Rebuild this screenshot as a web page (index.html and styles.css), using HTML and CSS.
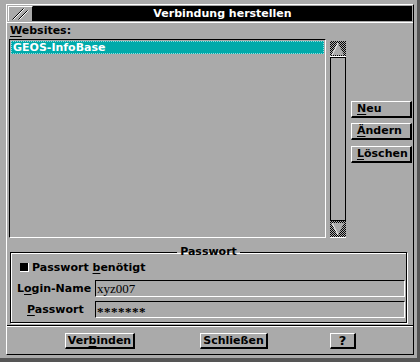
FILE: index.html
```html
<!DOCTYPE html>
<html lang="de">
  <head>
    <meta charset="UTF-8" />
    <title>Verbindung herstellen</title>
    <link rel="stylesheet" href="styles.css">
  </head>
  <body>
    <div class="window">
      <div class="frame">
        <div class="titlebar">
          <div class="sysmenu">
            <svg width="23" height="13" viewBox="0 0 23 13">
              <path d="M3.5 12.5 L14.5 1.5" stroke="#000" />
              <path d="M4.5 12.5 L15.5 1.5" stroke="#fff" />
              <path d="M9.5 12.5 L18.5 3.5" stroke="#000" />
              <path d="M10.5 12.5 L19.5 3.5" stroke="#fff" />
            </svg>
          </div>
          <div class="title">Verbindung herstellen</div>
        </div>

        <div class="main">
          <div class="label"><u>W</u>ebsites:</div>
          <div class="list-row">
            <div class="listbox">
              <div class="item selected">GEOS-InfoBase</div>
            </div>
            <div class="scrollbar">
              <div class="arrow up">
                <svg width="14" height="14" viewBox="0 0 14 14">
                  <polygon points="7,1 13,13 1,13" fill="#aaa" />
                  <path d="M7 1 L1 13" stroke="#fff" />
                </svg>
              </div>
              <div class="track"></div>
              <div class="arrow down">
                <svg width="14" height="14" viewBox="0 0 14 14">
                  <polygon points="1,1 13,1 7,13" fill="#aaa" />
                  <path d="M1 1 L7 13" stroke="#fff" />
                </svg>
              </div>
            </div>
            <div class="side-buttons">
              <a class="btn side" href="#"><u>N</u>eu</a>
              <a class="btn side" href="#"><u>Ä</u>ndern</a>
              <a class="btn side" href="#"><u>L</u>öschen</a>
            </div>
          </div>

          <fieldset class="group">
            <legend>Passwort</legend>
            <div class="check-row">
              <span class="checkbox"></span>
              <span>Passwort <u>b</u>enötigt</span>
            </div>
            <div class="field-row">
              <span class="field-label login">L<u>o</u>gin-Name</span>
              <div class="field">xyz007</div>
            </div>
            <div class="field-row second">
              <span class="field-label pass"><u>P</u>asswort</span>
              <div class="field pw">*******</div>
            </div>
          </fieldset>
        </div>

        <div class="bottom-bar">
          <a class="btn wide verbinden" href="#">Ver<u>b</u>inden</a>
          <a class="btn wide schliessen" href="#">Schließen</a>
          <a class="btn help" href="#">?</a>
        </div>
      </div>
    </div>
  </body>
</html>
```

FILE: styles.css
```css
* {
  margin: 0;
  padding: 0;
  box-sizing: border-box;
}
body {
  width: 420px;
  height: 362px;
  background: #aaa;
  font: bold 11px "DejaVu Sans", sans-serif;
  color: #000;
}
u {
  text-decoration-thickness: 1px;
  text-underline-offset: 2px;
}
.window {
  width: 420px;
  height: 362px;
  padding: 4px 0 0 6px;
  border-right: 3px solid #555;
  border-bottom: 4px solid #555;
}
.frame {
  width: 408px;
  height: 351px;
  border-top: 1px solid #fff;
  border-left: 1px solid #fff;
  border-right: 1px solid #000;
  border-bottom: 1px solid #000;
  display: flex;
  flex-direction: column;
}
/*
  Titelleiste
*/
.titlebar {
  height: 17px;
  padding: 1px 1px 0 1px;
  display: flex;
}
.sysmenu {
  width: 25px;
  height: 15px;
  border-top: 1px solid #fff;
  border-left: 1px solid #fff;
  border-right: 1px solid #000;
}
.sysmenu svg {
  display: block;
}
.title {
  flex: 1;
  height: 15px;
  background: #000;
  color: #fff;
  text-align: center;
  line-height: 15px;
}
/*
  Hauptbereich
*/
.main {
  height: 304px;
  border-top: 1px solid #fff;
  border-bottom: 1px solid #000;
  padding: 0 0 0 2px;
}
.label {
  height: 16px;
  line-height: 16px;
  padding-left: 1px;
}
.list-row {
  height: 200px;
  display: flex;
}
.listbox {
  width: 317px;
  height: 199px;
  border-top: 1px solid #000;
  border-left: 1px solid #000;
  border-right: 1px solid #fff;
  border-bottom: 1px solid #fff;
  padding: 1px;
}
.item {
  height: 13px;
  line-height: 11px;
  padding-left: 1px;
}
.item.selected {
  background: #00aaaa;
  color: #fff;
  border: 1px dotted #8fdede;
}
.scrollbar {
  width: 16px;
  height: 197px;
  margin: 2px 0 0 4px;
  display: flex;
  flex-direction: column;
}
.arrow {
  height: 16px;
  background: repeating-conic-gradient(#000 0 25%, #aaa 0 50%) 0 0 / 2px 2px;
  display: flex;
  justify-content: center;
  align-items: center;
}
.arrow.up {
  border-bottom: 1px solid #fff;
}
.arrow.down {
  height: 18px;
  border-top: 1px solid #000;
  border-bottom: 1px solid #fff;
}
.arrow svg {
  display: block;
}
.track {
  flex: 1;
  border-top: 1px solid #000;
  border-left: 1px solid #000;
  border-right: 1px solid #000;
}
.side-buttons {
  width: 61px;
  margin: 62px 0 0 5px;
  display: flex;
  flex-direction: column;
  gap: 5px;
}
.btn {
  display: block;
  height: 17px;
  line-height: 14px;
  background: #aaa;
  color: #000;
  text-decoration: none;
  border-top: 1px solid #fff;
  border-left: 1px solid #fff;
  border-right: 2px solid #000;
  border-bottom: 2px solid #000;
}
.btn.side {
  padding-left: 5px;
}
.btn.side:last-child {
  margin-top: 1px;
}
/*
  Passwort-Gruppe
*/
.group {
  width: 397px;
  height: 77px;
  margin: 7px 0 0 1px;
  border: 1px solid #000;
  box-shadow: 1px 1px 0 #fff, inset 1px 1px 0 #fff;
  padding: 0;
}
.group legend {
  margin: 0 auto;
  padding: 0 3px;
  line-height: 12px;
}
.check-row {
  height: 14px;
  margin-top: 2px;
  padding-left: 9px;
  display: flex;
  align-items: center;
  gap: 3px;
}
.checkbox {
  width: 9px;
  height: 9px;
  background: #000;
  border-right: 1px solid #fff;
  border-bottom: 1px solid #fff;
}
.field-row {
  height: 17px;
  margin-top: 6px;
  display: flex;
  align-items: center;
}
.field-row.second {
  margin-top: 4px;
}
.field-label {
  width: 84px;
}
.field-label.login {
  padding-left: 6px;
}
.field-label.pass {
  padding-left: 16px;
}
.field {
  width: 310px;
  height: 17px;
  border-top: 1px solid #000;
  border-left: 1px solid #000;
  border-right: 1px solid #fff;
  border-bottom: 1px solid #fff;
  padding-left: 1px;
  font: normal 13px/15px "Liberation Serif", serif;
}
.field.pw {
  font-weight: bold;
  letter-spacing: 0.5px;
  line-height: 19px;
}
/*
  Untere Knopfleiste
*/
.bottom-bar {
  flex: 1;
  border-top: 1px solid #fff;
  padding-top: 6px;
  display: flex;
  align-items: flex-start;
}
.btn.wide,
.btn.help {
  height: 16px;
  line-height: 13px;
  text-align: center;
}
.verbinden {
  width: 70px;
  margin-left: 58px;
}
.schliessen {
  width: 68px;
  margin-left: 65px;
}
.help {
  width: 26px;
  margin-left: 62px;
  font-size: 13px;
}
```
